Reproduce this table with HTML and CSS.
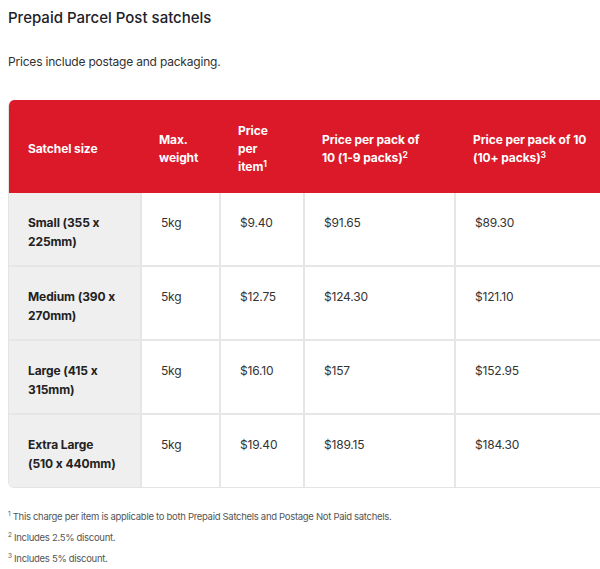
FILE: index.html
```html
<!DOCTYPE html>
<html>
<head>
<meta charset="utf-8">
<link rel="stylesheet" href="styles.css">
</head>
<body>
<h2 class="title">Prepaid Parcel Post satchels</h2>
<p class="intro">Prices include postage and packaging.</p>
<div class="table-wrap">
<table class="prices">
<thead>
<tr>
<th class="c1">Satchel size</th>
<th class="c2">Max. weight</th>
<th class="c3">Price per item<sup>1</sup></th>
<th class="c4">Price per pack of 10 (1-9 packs)<sup>2</sup></th>
<th class="c5">Price per pack of 10 (10+ packs)<sup>3</sup></th>
</tr>
</thead>
<tbody>
<tr><th>Small (355 x 225mm)</th><td>5kg</td><td>$9.40</td><td>$91.65</td><td>$89.30</td></tr>
<tr><th>Medium (390 x 270mm)</th><td>5kg</td><td>$12.75</td><td>$124.30</td><td>$121.10</td></tr>
<tr><th>Large (415 x 315mm)</th><td>5kg</td><td>$16.10</td><td>$157</td><td>$152.95</td></tr>
<tr><th>Extra Large (510 x 440mm)</th><td>5kg</td><td>$19.40</td><td>$189.15</td><td>$184.30</td></tr>
</tbody>
</table>
</div>
<div class="notes">
<p><sup>1</sup> This charge per item is applicable to both Prepaid Satchels and Postage Not Paid satchels.</p>
<p><sup>2</sup> Includes 2.5% discount.</p>
<p><sup>3</sup> Includes 5% discount.</p>
</div>
</body>
</html>
```
FILE: styles.css
```css
html, body {
  margin: 0;
  padding: 0;
  background: #fff;
  overflow: hidden;
}
body {
  padding: 0 0 0 8px;
  font-family: Inter, "Noto Sans", sans-serif;
  color: #333;
}
.title {
  margin: 0;
  padding-top: 8px;
  font-size: 15px;
  line-height: 20px;
  font-weight: 500;
  color: #212129;
}
.intro {
  margin: 25px 0 0;
  font-size: 12px;
  letter-spacing: -0.2px;
  line-height: 18px;
  color: #313131;
}
.table-wrap {
  margin-top: 29px;
  width: 620px;
}
.prices {
  width: 620px;
  border-collapse: separate;
  border-spacing: 0;
  table-layout: fixed;
  font-size: 12px;
  letter-spacing: -0.2px;
  border-radius: 6px;
  overflow: hidden;
  border: 1px solid #e4e4e4;
  border-top: none;
}
.prices th, .prices td {
  text-align: left;
  vertical-align: top;
}
.prices thead th {
  background: #dc1928;
  color: #fff;
  font-weight: 700;
  letter-spacing: -0.1px;
  line-height: 18px;
  padding: 22px 19px 17px;
  vertical-align: middle;
  height: 54px;
}
.c1 { width: 93px; }
.c2 { width: 41px; }
.c3 { width: 46px; }
.c4 { width: 113px; }
.c5 { width: auto; }
.prices sup {
  font-size: 8.5px;
  line-height: 0;
  vertical-align: 4px;
}
.prices tbody th,
.prices tbody td {
  height: 38px;
  padding: 20px 19px 14px;
  line-height: 19px;
  border-bottom: 2px solid #e6e6e6;
  border-left: 2px solid #e6e6e6;
}
.prices tbody tr:last-child th,
.prices tbody tr:last-child td {
  border-bottom: none;
}
.prices tbody th {
  background: #efefef;
  color: #222;
  font-weight: 700;
  letter-spacing: -0.1px;
  border-left: none;
}
.prices tbody td {
  color: #333;
  font-weight: 400;
}
.notes {
  margin-top: 22px;
  font-size: 9.5px;
  letter-spacing: -0.3px;
  color: #555;
}
.notes p {
  margin: 0 0 7px;
  line-height: 14px;
}
.notes sup {
  font-size: 6.5px;
  line-height: 0;
  vertical-align: 4px;
}
```
